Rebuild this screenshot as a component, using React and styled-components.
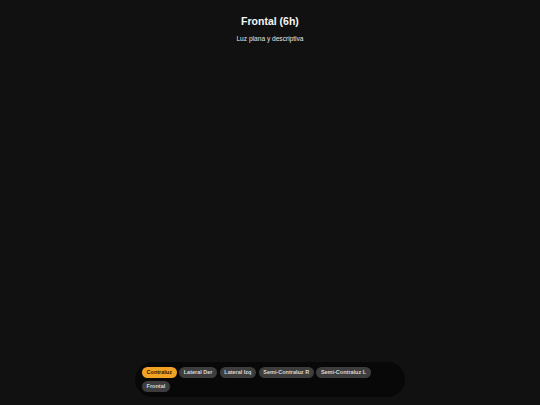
import React, { useState } from 'react';
import styled, { createGlobalStyle } from 'styled-components';

const GlobalStyle = createGlobalStyle`
  html, body {
    margin: 0;
    padding: 0;
    background: #111111;
  }
  * {
    box-sizing: border-box;
  }
`;

const Page = styled.div`
  height: 100vh;
  display: flex;
  flex-direction: column;
  justify-content: space-between;
  align-items: center;
  background: #111111;
  font-family: "Liberation Sans", Arial, sans-serif;
  color: #ffffff;
`;

const Header = styled.header`
  padding-top: 15px;
  display: flex;
  flex-direction: column;
  align-items: center;
  gap: 8px;
`;

const Title = styled.h1`
  margin: 0;
  font-size: 10.5px;
  font-weight: 700;
  line-height: 12px;
  color: #f6f6f6;
`;

const Subtitle = styled.p`
  margin: 0;
  font-size: 6.6px;
  line-height: 7.5px;
  color: #e4e4e4;
`;

const Dock = styled.nav`
  width: 270px;
  margin-bottom: 8px;
  padding: 5px 7px 5.5px 7px;
  background: #080808;
  border-radius: 18px;
  display: flex;
  flex-wrap: wrap;
  gap: 3px 2.6px;
`;

const Chip = styled.button`
  border: none;
  margin: 0;
  height: 11px;
  padding: 0 4.6px;
  border-radius: 6px;
  font-family: inherit;
  font-size: 5.5px;
  font-weight: 700;
  line-height: 11px;
  white-space: nowrap;
  cursor: pointer;
  background: ${({ $active }) => ($active ? '#f2a324' : '#3d3d3d')};
  color: ${({ $active }) => ($active ? '#2a1a00' : '#d8d8d8')};
`;

const lights = [
  'Contraluz',
  'Lateral Der',
  'Lateral Izq',
  'Semi-Contraluz R',
  'Semi-Contraluz L',
  'Frontal',
];

const App = () => {
  const [active, setActive] = useState('Contraluz');

  return (
    <>
      <GlobalStyle />
      <Page>
        <Header>
          <Title>Frontal (6h)</Title>
          <Subtitle>Luz plana y descriptiva</Subtitle>
        </Header>
        <Dock>
          {lights.map((name) => (
            <Chip key={name} $active={name === active} onClick={() => setActive(name)}>
              {name}
            </Chip>
          ))}
        </Dock>
      </Page>
    </>
  );
};

export default App;
